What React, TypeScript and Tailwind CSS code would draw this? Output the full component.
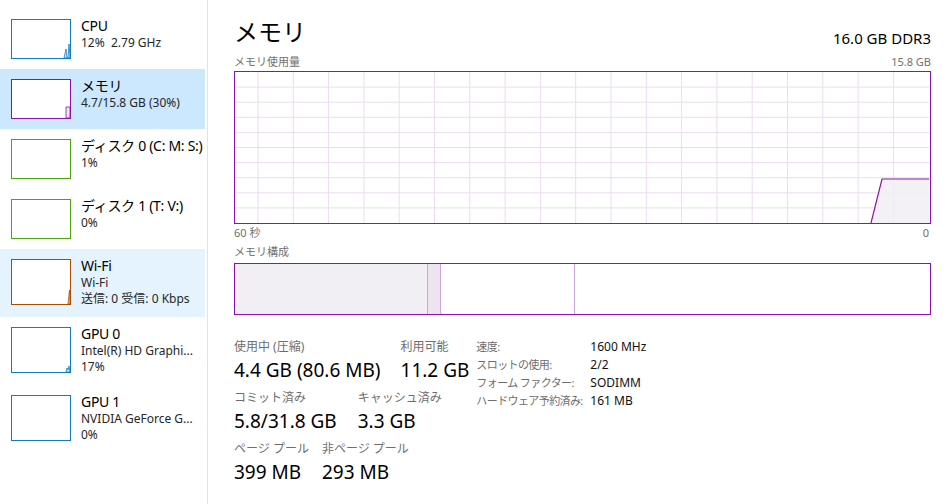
import React from 'react'

const font = { fontFamily: '"Noto Sans", "Noto Sans CJK JP", sans-serif' }

type Item = {
  title: string
  lines: string[]
  color: string
  state?: 'selected' | 'hover'
  spark?: React.ReactNode
}

const items: Item[] = [
  {
    title: 'CPU',
    lines: ['12%  2.79 GHz'],
    color: '#117dbb',
    spark: (
      <polygon points="52,38 54,29 55,38 56,38 57,24 58,38" fill="#d6e8f5" stroke="#117dbb" strokeWidth="0.8" />
    ),
  },
  {
    title: 'メモリ',
    lines: ['4.7/15.8 GB (30%)'],
    color: '#8b12ae',
    state: 'selected',
    spark: <polygon points="54,38 54,27 58,27 58,38" fill="#efe6f2" stroke="#8b12ae" strokeWidth="0.8" />,
  },
  { title: 'ディスク 0 (C: M: S:)', lines: ['1%'], color: '#4da60c' },
  { title: 'ディスク 1 (T: V:)', lines: ['0%'], color: '#4da60c' },
  {
    title: 'Wi-Fi',
    lines: ['Wi-Fi', '送信: 0 受信: 0 Kbps'],
    color: '#a74f01',
    state: 'hover',
    spark: <polygon points="56,44 57.5,30 58,44" fill="#f3e6da" stroke="#a74f01" strokeWidth="0.8" />,
  },
  {
    title: 'GPU 0',
    lines: ['Intel(R) HD Graphi...', '17%'],
    color: '#117dbb',
    spark: <polygon points="54,44 55,40 56,42 57,38 58,44" fill="#d6e8f5" stroke="#117dbb" strokeWidth="0.8" />,
  },
  { title: 'GPU 1', lines: ['NVIDIA GeForce G...', '0%'], color: '#117dbb' },
]

function SideItem({ item }: { item: Item }) {
  const tall = item.lines.length > 1
  const h = tall ? 46 : 40
  return (
    <div
      className={
        'flex items-start gap-[10px] pl-[11px] py-[10px] ' +
        (item.state === 'selected' ? 'bg-[#cce8ff]' : item.state === 'hover' ? 'bg-[#e5f3ff]' : '')
      }
    >
      <div
        className={'w-[60px] shrink-0 border bg-white ' + (tall ? 'h-[46px]' : 'h-[40px]')}
        style={{ borderColor: item.color }}
      >
        <svg width="58" height={h - 2} viewBox={`0 0 58 ${h - 2}`} className="block">
          {item.spark}
        </svg>
      </div>
      <div className="-mt-[2px] min-w-0">
        <div className="text-[14px] leading-[18px] tracking-[-0.3px] text-black whitespace-nowrap">{item.title}</div>
        {item.lines.map((l) => (
          <div key={l} className="text-[12px] leading-[16px] text-[#262626] whitespace-pre">
            {l}
          </div>
        ))}
      </div>
    </div>
  )
}

function UsageChart() {
  const vx = Array.from({ length: 19 }, (_, k) => 23 + 35.3 * k)
  const hy = Array.from({ length: 9 }, (_, k) => 15.1 * (k + 1))
  return (
    <div className="h-[153px] border border-[#8b12ae]">
      <svg width="694" height="151" viewBox="0 0 694 151" className="block">
        {vx.map((x) => (
          <line key={'v' + x} x1={x} y1="0" x2={x} y2="151" stroke="#eddcf1" strokeWidth="1" />
        ))}
        {hy.map((y) => (
          <line key={'h' + y} x1="0" y1={y} x2="694" y2={y} stroke="#eddcf1" strokeWidth="1" />
        ))}
        <polygon points="636,151 647,107 694,107 694,151" fill="#f1eef3" fillOpacity="0.85" />
        <polyline points="636,151 647,107 694,107" fill="none" stroke="#8b12ae" strokeWidth="1.2" />
      </svg>
    </div>
  )
}

function Stat({ label, value }: { label: string; value: string }) {
  return (
    <div className="whitespace-nowrap">
      <div className="text-[12px] leading-[16px] text-[#6e6e6e]">{label}</div>
      <div className="text-[19px] leading-[30px] text-black">{value}</div>
    </div>
  )
}

export default function App() {
  return (
    <div className="w-[948px] h-[504px] bg-white flex overflow-hidden" style={font}>
      {/* Sidebar */}
      <aside className="w-[205px] shrink-0 pt-[9px]">
        {items.map((it) => (
          <SideItem key={it.title} item={it} />
        ))}
      </aside>
      <div className="w-[1px] ml-[2px] bg-[#e3e3e3] shrink-0" />

      {/* Main */}
      <main className="flex-1 pl-[26px] pr-[17px] pt-[12px]">
        <div className="flex items-end justify-between h-[40px]">
          <div className="text-[24px] leading-[40px] text-black">メモリ</div>
          <div className="text-[15px] leading-[22px] mb-[3px] text-black">16.0 GB DDR3</div>
        </div>
        <div className="flex justify-between text-[11px] leading-[19px] text-[#707070]">
          <span>メモリ使用量</span>
          <span>15.8 GB</span>
        </div>
        <UsageChart />
        <div className="flex justify-between text-[11px] leading-[17px] text-[#707070]">
          <span>60 秒</span>
          <span className="pr-[2px]">0</span>
        </div>
        <div className="text-[11px] leading-[22px] text-[#707070]">メモリ構成</div>
        <div className="h-[52px] border border-[#8b12ae] flex">
          <div className="w-[192px] bg-[#f2eff4]" />
          <div className="w-[14px] border-x border-[#cda5da] bg-[#ede4f0]" />
          <div className="w-[134px] border-r border-[#cda5da]" />
          <div className="flex-1" />
        </div>

        <div className="mt-[24px] flex gap-[7px]">
          <div className="flex flex-col gap-[5px]">
            <div className="flex gap-[20px]">
              <Stat label="使用中 (圧縮)" value="4.4 GB (80.6 MB)" />
              <Stat label="利用可能" value="11.2 GB" />
            </div>
            <div className="flex gap-[21px]">
              <Stat label="コミット済み" value="5.8/31.8 GB" />
              <Stat label="キャッシュ済み" value="3.3 GB" />
            </div>
            <div className="flex gap-[13px]">
              <Stat label="ページ プール" value="399 MB" />
              <Stat label="非ページ プール" value="293 MB" />
            </div>
          </div>
          <div className="-mt-[1px] text-[12px] leading-[18px] whitespace-nowrap">
            {[
              ['速度:', '1600 MHz'],
              ['スロットの使用:', '2/2'],
              ['フォーム ファクター:', 'SODIMM'],
              ['ハードウェア予約済み:', '161 MB'],
            ].map(([k, v]) => (
              <div key={k} className="flex">
                <span className="w-[114px] text-[11px] tracking-[-0.6px] text-[#6e6e6e]">{k}</span>
                <span className="text-[#111]">{v}</span>
              </div>
            ))}
          </div>
        </div>
      </main>
    </div>
  )
}
